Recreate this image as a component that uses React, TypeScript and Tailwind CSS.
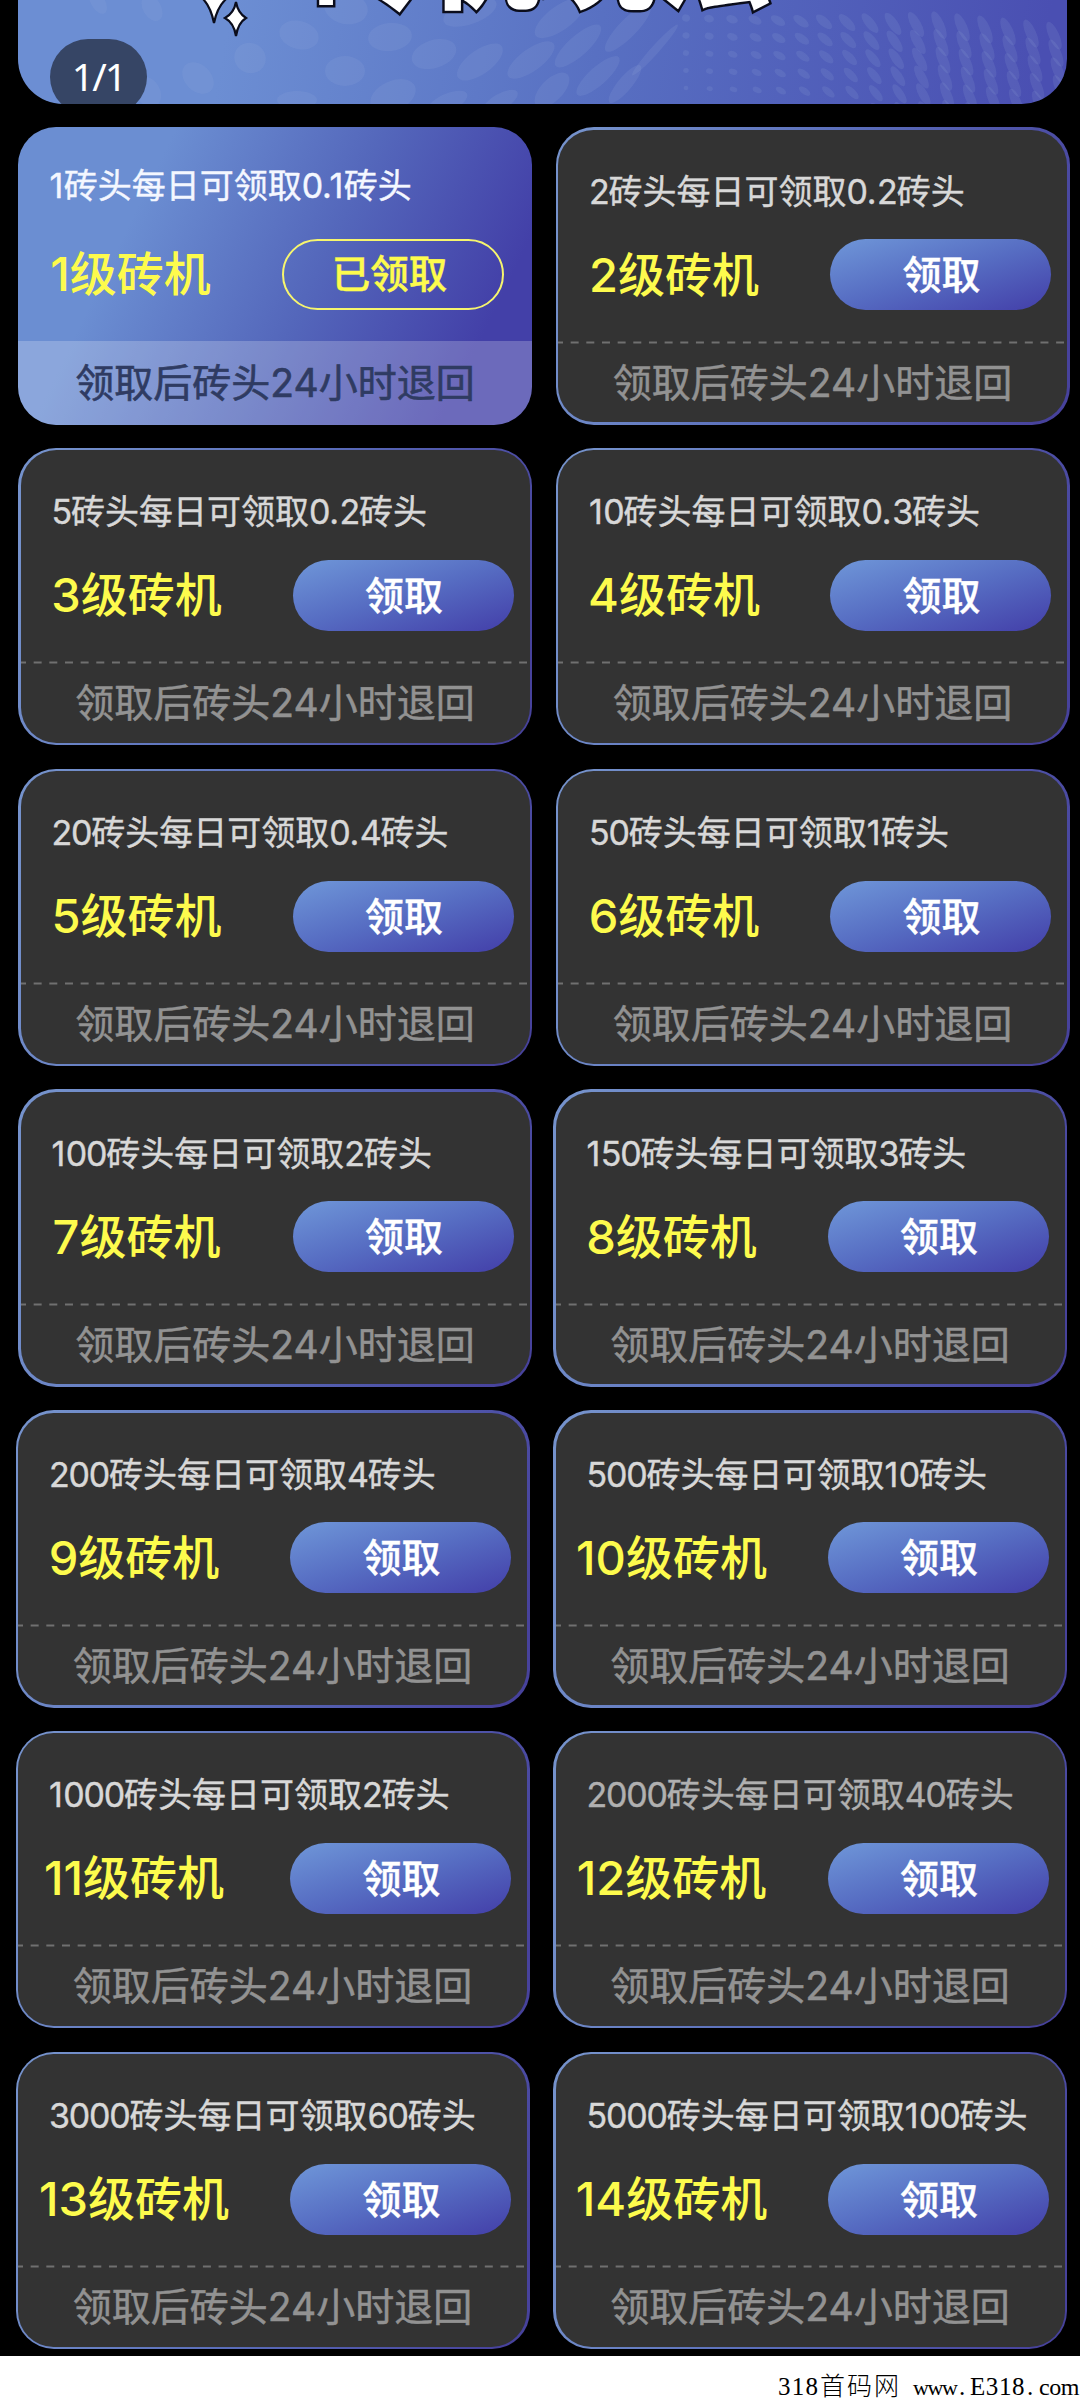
import React from "react";

type Machine = { level: number; rule: string; claimed?: boolean };
type Row = { items: Machine[]; offset: string };

const WIDE = "pl-[18px] gap-[23.5px]";
const MID = "pl-[18px] gap-[21px]";
const NEAR = "pl-[15.5px] gap-[23.5px]";

const rows: Row[] = [
  { offset: WIDE, items: [{ level: 1, rule: "1砖头每日可领取0.1砖头", claimed: true }, { level: 2, rule: "2砖头每日可领取0.2砖头" }] },
  { offset: WIDE, items: [{ level: 3, rule: "5砖头每日可领取0.2砖头" }, { level: 4, rule: "10砖头每日可领取0.3砖头" }] },
  { offset: WIDE, items: [{ level: 5, rule: "20砖头每日可领取0.4砖头" }, { level: 6, rule: "50砖头每日可领取1砖头" }] },
  { offset: MID, items: [{ level: 7, rule: "100砖头每日可领取2砖头" }, { level: 8, rule: "150砖头每日可领取3砖头" }] },
  { offset: NEAR, items: [{ level: 9, rule: "200砖头每日可领取4砖头" }, { level: 10, rule: "500砖头每日可领取10砖头" }] },
  { offset: NEAR, items: [{ level: 11, rule: "1000砖头每日可领取2砖头" }, { level: 12, rule: "2000砖头每日可领取40砖头" }] },
  { offset: NEAR, items: [{ level: 13, rule: "3000砖头每日可领取60砖头" }, { level: 14, rule: "5000砖头每日可领取100砖头" }] },
];

/* Evens out digit widths: wide figures are tightened, "1" and "." get a little air. */
function Figures({ text }: { text: string }) {
  return (
    <>
      {text.split(/([02-9]+|[.1]+)/).map((part, i) =>
        /^[02-9]+$/.test(part) ? (
          <span key={i} className="tracking-[-1.2px]">{part}</span>
        ) : /^[.1]+$/.test(part) ? (
          <span key={i} className="tracking-[0.5px]">{part}</span>
        ) : (
          part
        )
      )}
    </>
  );
}

function MachineCard({ level, rule, claimed }: Machine) {
  return (
    <div
      className={
        claimed
          ? "h-[297.5px] w-[514px] shrink-0 overflow-hidden rounded-[38px] bg-[linear-gradient(116deg,#6b8ed2_24%,#5467bb_56%,#4340a8_86%)]"
          : "h-[297.5px] w-[514px] shrink-0 rounded-[38px] bg-[linear-gradient(107deg,#7592cc_5%,#5a6dba_50%,#47429c_95%)] p-[2.5px]"
      }
    >
      <div className={claimed ? "h-full p-[2.5px] pb-0" : "h-full rounded-[35.5px] bg-[#333333]"}>
        <div className="flex h-[211px] flex-col">
          <div
            className={
              claimed
                ? "mt-[36px] pl-[29px] text-[34px] leading-[40px] text-[#f4f7ff] [-webkit-text-stroke:0.4px_#f4f7ff]"
                : level === 12
                ? "mt-[42px] pl-[31px] text-[34px] leading-[40px] text-[#b0b0b0] [-webkit-text-stroke:0.4px_#b0b0b0]"
                : "mt-[42px] pl-[31px] text-[34px] leading-[40px] text-[#d8d8d8] [-webkit-text-stroke:0.4px_#d8d8d8]"
            }
          >
            <span className="block whitespace-nowrap">
              <Figures text={rule} />
            </span>
          </div>
          <div className={claimed ? "mt-[33px] flex h-[71px] items-center justify-between pr-[26px]" : "mt-[27.5px] flex h-[71px] items-center justify-between pr-[16px]"}>
            <div className={claimed ? "ml-[10px] flex w-[200px] justify-center" : "ml-[16px] flex w-[200px] justify-center"}>
              <span className="whitespace-nowrap text-[47px] font-medium leading-[70px] text-[#fdfb4d]">{level}级砖机</span>
            </div>
            <button
              className={
                claimed
                  ? "h-[71px] w-[222px] rounded-full border-[2.5px] border-[#f6f56e] pr-[6px] text-[38.5px] font-medium leading-[65px] text-[#fdfb4d] [-webkit-text-stroke:0.4px_#fdfb4d]"
                  : "h-[71px] w-[221px] rounded-full bg-[linear-gradient(163deg,#6b90d5_8%,#566cc2_50%,#4441aa_97%)] pl-[2px] text-[39px] font-medium leading-[69px] text-white [-webkit-text-stroke:0.4px_#ffffff]"
              }
            >
              {claimed ? "已领取" : "领取"}
            </button>
          </div>
        </div>
        {!claimed && (
          <svg className="block h-[3px] w-[508px]" viewBox="0 0 508 3">
            <line x1="-3" y1="1.5" x2="506" y2="1.5" stroke="#707070" strokeWidth="2" strokeDasharray="8 7.66" />
          </svg>
        )}
        <div
          className={
            claimed
              ? "mx-[-2.5px] flex h-[84px] items-center justify-center bg-white/22 text-[39px] text-[#2f3b62] [-webkit-text-stroke:0.6px_#2f3b62]"
              : "flex h-[78px] items-center justify-center text-[39px] text-[#929292] [-webkit-text-stroke:0.5px_#929292]"
          }
        >
          <span className="whitespace-nowrap leading-[58px]">领取后砖头24小时退回</span>
        </div>
      </div>
    </div>
  );
}

/* Halftone decoration: large sparse dots on the left, a fine slanted mesh on the right. */
const bigDots = [
  [98, 2, 7, 13, -30], [152, 8, 9, 14, -30], [198, 78, 13, 18, -45], [250, 58, 16, 15, 30],
  [299, 35, 20, 14, 15], [346, 8, 22, 16, 12], [345, 71, 20, 15, 0], [390, 37, 22, 14, -6],
  [297, 100, 20, 9, 0], [393, 96, 24, 15, -25], [434, 54, 23, 14, -18], [148, 92, 12, 16, -30],
  [480, 62, 27, 12, -36], [447, 103, 22, 9, -25], [531, 60, 28, 11, -36], [500, 102, 20, 8, -30],
  [578, 46, 30, 10, -42], [598, 76, 28, 9, -42], [628, 28, 32, 9, -46], [552, 90, 22, 11, -45],
  [560, 18, 30, 12, -36], [625, 84, 24, 7, -50], [655, 50, 34, 4, -48], [470, 12, 28, 12, -20],
];

const mesh: number[][] = [];
for (let r = 0; r < 7; r++) {
  for (let c = 0; c < 17; c++) {
    const grow = Math.min(1, c / 11);
    const fade = 1 - r * 0.1 * (1 - grow * 0.8);
    mesh.push([
      686 + c * 23 + r * 2 * grow,
      18 + r * 17.5 - grow * 16 + c * 2.1,
      (4 + grow * 11) * fade,
      (3.6 + grow * 1.6) * fade,
      10 + grow * 56,
    ]);
  }
}

function Banner() {
  return (
    <div className="relative ml-[18px] h-[104px] w-[1049px] overflow-hidden rounded-b-[45px] bg-[linear-gradient(100deg,#6c8ed3_20%,#5870c2_55%,#4a4fb2_97%)]">
      <svg className="absolute inset-0 h-[104px] w-[1049px]" viewBox="18 0 1049 104">
        <g fill="#9daedd" fillOpacity="0.15">
          {bigDots.map(([x, y, rx, ry, a], i) => (
            <ellipse key={i} cx={x} cy={y} rx={rx} ry={ry} transform={`rotate(${a} ${x} ${y})`} />
          ))}
        </g>
        <g fill="#9daedd" fillOpacity="0.14">
          {mesh.map(([x, y, rx, ry, a], i) => (
            <ellipse key={i} cx={x} cy={y} rx={rx} ry={ry} transform={`rotate(${a} ${x} ${y})`} />
          ))}
        </g>
        <g fill="#ffffff" stroke="#0b0d1c" strokeWidth="2.2" strokeLinejoin="miter">
          <path d="M214 -20 Q218 -6 225 0 Q217 8 214 23 Q211 8 204 0 Q211 -6 214 -20Z" />
          <path d="M236 2 Q238 13 246 18 Q238 23 236 36 Q234 23 225 18 Q234 13 236 2Z" />
        </g>
      </svg>
      <div className="absolute left-[290px] top-[-110px] whitespace-nowrap font-['Noto_Sans_CJK_SC',sans-serif] text-[116px] font-black leading-[116px] text-white [-webkit-text-stroke:5px_#0b0d1c] [paint-order:stroke_fill]">
        砖机玩法
      </div>
      <div className="absolute left-[32px] top-[39px] flex h-[76px] w-[97px] items-center justify-center rounded-[38px] bg-[#364565] pb-[1px] font-['Noto_Sans','Noto_Sans_CJK_SC',sans-serif] text-[39px] tracking-[-1.8px] text-white">
        1/1
      </div>
    </div>
  );
}

export default function App() {
  return (
    <div className="flex h-[2400px] w-[1080px] flex-col overflow-hidden bg-white font-['Inter','Noto_Sans_CJK_SC',sans-serif]">
      <div className="h-[2356px] shrink-0 overflow-hidden bg-black">
        <Banner />
        <div className="mt-[23px] flex flex-col gap-[23.3px]">
          {rows.map((row, i) => (
            <div key={i} className={`flex ${row.offset}`}>
              {row.items.map((m) => (
                <MachineCard key={m.level} {...m} />
              ))}
            </div>
          ))}
        </div>
      </div>
      <div className="flex h-[44px] items-baseline justify-end whitespace-pre pt-[18px] font-['Liberation_Serif','Noto_Sans_CJK_SC',serif] text-[25px] leading-[26px] text-black">
        <span className="w-[42px] tracking-[1.2px]">318</span>
        <span className="w-[82px] text-[25px] font-light tracking-[2px]">首码网</span>
        <span className="ml-[11px] w-[44px] text-[22px] tracking-[-1.4px]">www</span>
        <span className="w-[13px] pl-[2px]">.</span>
        <span className="w-[55px] tracking-[0.6px]">E318</span>
        <span className="w-[14px] pl-[2px]">.</span>
        <span className="w-[41px] text-[24px] tracking-[-0.4px]">com</span>
      </div>
    </div>
  );
}
